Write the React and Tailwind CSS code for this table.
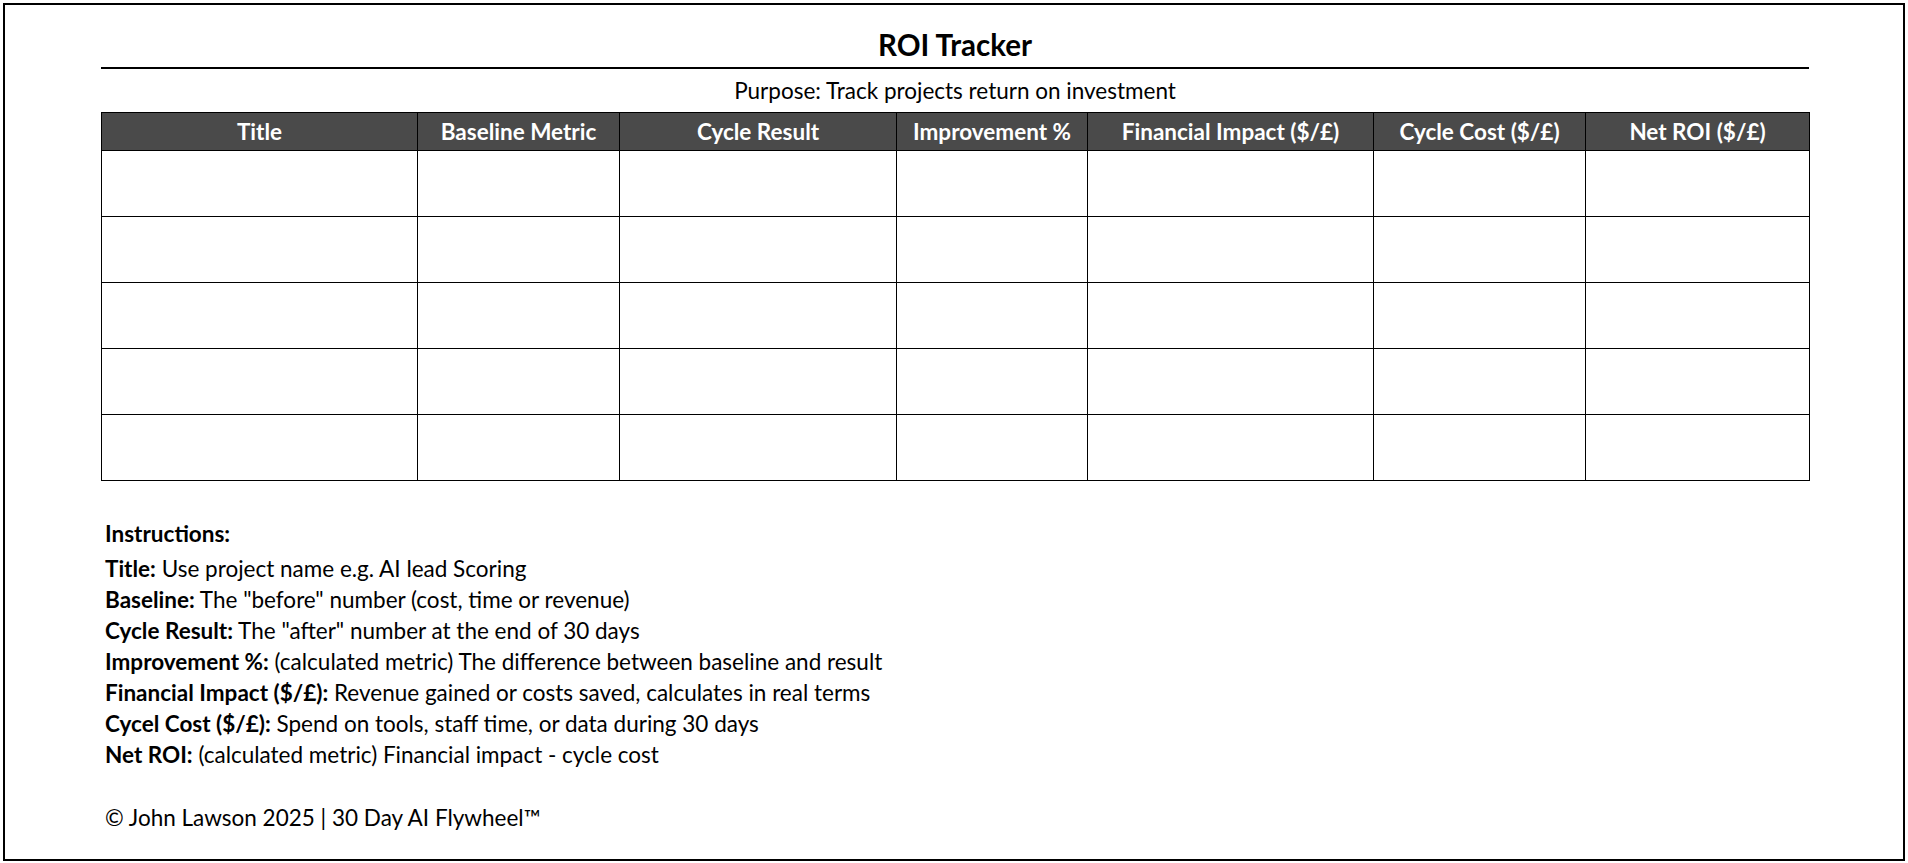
import React from 'react';

const columns = [
    { label: 'Title', width: 'w-[316px]' },
    { label: 'Baseline Metric', width: 'w-[202px]' },
    { label: 'Cycle Result', width: 'w-[277px]' },
    { label: 'Improvement %', width: 'w-[191px]' },
    { label: 'Financial Impact ($/£)', width: 'w-[286px]' },
    { label: 'Cycle Cost ($/£)', width: 'w-[212px]' },
    { label: 'Net ROI ($/£)', width: 'w-[224px]' },
];

const instructions = [
    ['Title:', 'Use project name e.g. AI lead Scoring'],
    ['Baseline:', 'The "before" number (cost, time or revenue)'],
    ['Cycle Result:', 'The "after" number at the end of 30 days'],
    ['Improvement %:', '(calculated metric) The difference between baseline and result'],
    ['Financial Impact ($/£):', 'Revenue gained or costs saved, calculates in real terms'],
    ['Cycel Cost ($/£):', 'Spend on tools, staff time, or data during 30 days'],
    ['Net ROI:', '(calculated metric) Financial impact - cycle cost'],
];

const App = () => {
    return (
        <div className="bg-white w-[1908px] h-[863px] p-[3px] font-['Lato','Liberation_Sans',sans-serif] text-black">
            <div className="w-[1902px] h-[858px] border-2 border-black">
                <div className="w-[1708px] ml-[96px]">

                    {/* Heading */}
                    <div className="h-[64px] pt-[22px] border-b-2 border-black text-center text-[29.5px] leading-[36px] font-bold">
                        ROI Tracker
                    </div>
                    <div className="h-[43px] flex items-center justify-center text-[22.5px]">
                        Purpose: Track projects return on investment
                    </div>

                    {/* Tracker table */}
                    <table className="table-fixed border-collapse w-[1708px]">
                        <thead>
                            <tr className="h-[38px] bg-[#4a4a4a]">
                                {columns.map((col) => (
                                    <th key={col.label} className={`${col.width} border border-black text-white text-[22.5px] leading-[30px] font-bold text-center p-0`}>
                                        {col.label}
                                    </th>
                                ))}
                            </tr>
                        </thead>
                        <tbody>
                            {[0, 1, 2, 3, 4].map((row) => (
                                <tr key={row} className="h-[66px]">
                                    {columns.map((col) => (
                                        <td key={col.label} className="border border-black p-0"></td>
                                    ))}
                                </tr>
                            ))}
                        </tbody>
                    </table>

                    {/* Instructions */}
                    <div className="pl-[4px] mt-[37px] text-[22.5px] leading-[31px]">
                        <div className="font-bold mb-[4px]">Instructions:</div>
                        {instructions.map(([term, text]) => (
                            <div key={term}>
                                <span className="font-bold">{term}</span> {text}
                            </div>
                        ))}
                        <div className="mt-[32px]">© John Lawson 2025 | 30 Day AI Flywheel™</div>
                    </div>

                </div>
            </div>
        </div>
    );
};

export default App;
